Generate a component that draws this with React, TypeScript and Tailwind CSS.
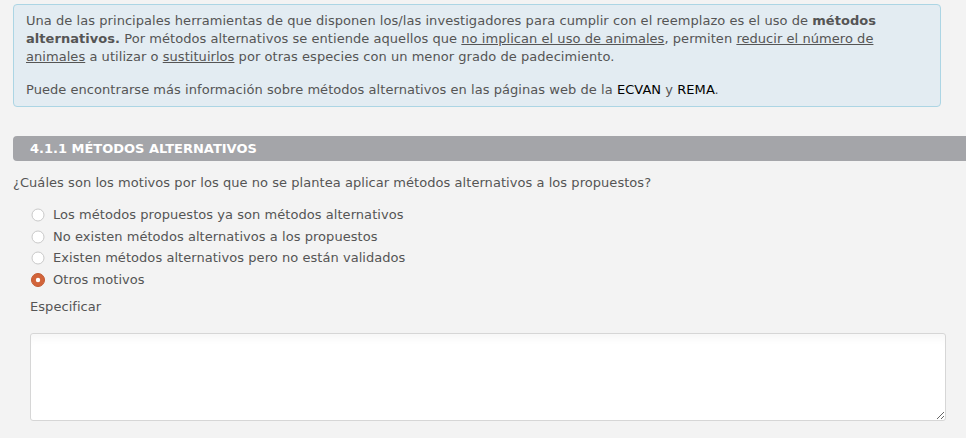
import React from "react";

function Radio({ checked }: { checked?: boolean }) {
  return (
    <svg width="14" height="14" viewBox="0 0 14 14" className="shrink-0">
      {checked ? (
        <>
          <circle cx="7" cy="7" r="6.5" fill="#d2643a" stroke="#c25a32" strokeWidth="1" />
          <circle cx="7" cy="7" r="2.2" fill="#ffffff" />
        </>
      ) : (
        <circle cx="7" cy="7" r="6" fill="#ffffff" stroke="#c9c9c9" strokeWidth="1" />
      )}
    </svg>
  );
}

const options = [
  { label: "Los métodos propuestos ya son métodos alternativos", checked: false },
  { label: "No existen métodos alternativos a los propuestos", checked: false },
  { label: "Existen métodos alternativos pero no están validados", checked: false },
  { label: "Otros motivos", checked: true },
];

export default function App() {
  return (
    <div
      className="w-[966px] h-[438px] overflow-hidden bg-[#f3f3f3] text-[13px] leading-[18px] tracking-[0.05px] text-[#555555]"
      style={{ fontFamily: '"DejaVu Sans", Verdana, sans-serif' }}
    >
      <div className="flex flex-col pl-[13px] pt-[4px]">
        <div className="w-[928px] h-[103px] rounded-[4px] border border-[#acd5e4] bg-[#e3ecf2] px-[12px] pt-[7px]">
          <p>
            Una de las principales herramientas de que disponen los/las investigadores para cumplir con el reemplazo es el uso de{" "}
            <b className="font-bold">métodos alternativos.</b> Por métodos alternativos se entiende aquellos que{" "}
            <span className="underline">no implican el uso de animales</span>, permiten{" "}
            <span className="underline">reducir el número de animales</span> a utilizar o{" "}
            <span className="underline">sustituirlos</span> por otras especies con un menor grado de padecimiento.
          </p>
          <p className="mt-[15px]">
            Puede encontrarse más información sobre métodos alternativos en las páginas web de la{" "}
            <span className="text-black">ECVAN</span> y <span className="text-black">REMA</span>.
          </p>
        </div>

        <div className="mt-[29px] h-[25px] rounded-l-[4px] bg-[#a4a5a9] pl-[17px] flex items-center text-[13px] tracking-normal font-bold text-white">
          4.1.1 MÉTODOS ALTERNATIVOS
        </div>

        <div className="mt-[13px]">
          ¿Cuáles son los motivos por los que no se plantea aplicar métodos alternativos a los propuestos?
        </div>

        <div className="mt-[12.5px] flex flex-col pl-[18px]">
          {options.map((o) => (
            <div key={o.label} className="flex h-[21.5px] items-center gap-[8px]">
              <Radio checked={o.checked} />
              <span>{o.label}</span>
            </div>
          ))}
        </div>

        <div className="mt-[7.5px] pl-[17px]">Especificar</div>

        <div className="mt-[17px] pl-[17px]">
          <textarea
            className="block w-[916px] h-[88px] rounded-[3px] border border-[#d6d6d6] bg-white shadow-[inset_0_10px_10px_-6px_rgba(0,0,0,0.04)] outline-none"
          />
        </div>
      </div>
    </div>
  );
}
